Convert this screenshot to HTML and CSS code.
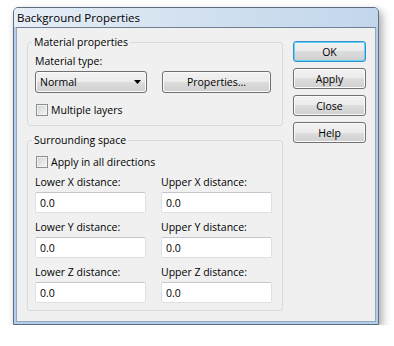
FILE: index.html
```html
<!DOCTYPE html>
<html>
<head>
    <title>Background Properties</title>
    <link rel="stylesheet" href="styles.css">
</head>
<body>
    <div class="window">
        <div class="titlebar">Background Properties</div>
        <div class="client">
            <div class="groups">
                <fieldset class="group material">
                    <legend>Material properties</legend>
                    <label class="field-label">Material type:</label>
                    <div class="material-row">
                        <button type="button" class="combo">
                            <span>Normal</span>
                            <svg width="7" height="4" viewBox="0 0 7 4"><polygon points="0,0 7,0 3.5,4" fill="#000"/></svg>
                        </button>
                        <button type="button" class="push props">Properties...</button>
                    </div>
                    <label class="check-row"><span class="check"></span>Multiple layers</label>
                </fieldset>

                <fieldset class="group space">
                    <legend>Surrounding space</legend>
                    <label class="check-row first"><span class="check"></span>Apply in all directions</label>
                    <div class="distances">
                        <div class="field">
                            <label>Lower X distance:</label>
                            <input type="text" value="0.0">
                        </div>
                        <div class="field">
                            <label>Upper X distance:</label>
                            <input type="text" value="0.0">
                        </div>
                        <div class="field">
                            <label>Lower Y distance:</label>
                            <input type="text" value="0.0">
                        </div>
                        <div class="field">
                            <label>Upper Y distance:</label>
                            <input type="text" value="0.0">
                        </div>
                        <div class="field">
                            <label>Lower Z distance:</label>
                            <input type="text" value="0.0">
                        </div>
                        <div class="field">
                            <label>Upper Z distance:</label>
                            <input type="text" value="0.0">
                        </div>
                    </div>
                </fieldset>
            </div>

            <div class="actions">
                <button type="button" class="push default">OK</button>
                <button type="button" class="push">Apply</button>
                <button type="button" class="push">Close</button>
                <button type="button" class="push">Help</button>
            </div>
        </div>
    </div>
</body>
</html>
```

FILE: styles.css
```css
body {
    margin: 0;
    background-color: #fff;
    font-family: "Open Sans", "Noto Sans", sans-serif;
    font-size: 10.5px;
    color: #000;
}

.window {
    width: 366px;
    margin: 7px 0 0 13px;
    box-sizing: border-box;
    border: 1px solid #5d6e82;
    border-radius: 5px 5px 0 0;
    padding: 0 2px 2px;
    background-color: #b4cde8;
    box-shadow: 3px 4px 9px rgba(0, 0, 0, 0.35);
}

.titlebar {
    height: 19px;
    line-height: 19px;
    margin: 0 -2px;
    padding-left: 3px;
    font-size: 11.5px;
    border-radius: 4px 4px 0 0;
    background: linear-gradient(to right, #e7eef6 0%, #d4e2f0 45%, #c2d6ec 100%);
}

.client {
    display: flex;
    padding: 7px 8px 10px 10px;
    border: 1px solid #93a7bf;
    border-top-color: #6f8094;
    background-color: #f0f0f0;
}

.groups {
    width: 256px;
    display: flex;
    flex-direction: column;
    gap: 7px;
}

.group {
    margin: 0;
    min-width: 0;
    padding: 5px 7px 8px;
    border: 1px solid #d3dce3;
    border-radius: 3px;
}

.group.space {
    padding-bottom: 7px;
}

.group legend {
    padding: 0 2px;
    margin-left: -3px;
    line-height: 14px;
}

.field-label,
.field label {
    display: block;
    line-height: 14px;
}

.material-row {
    display: flex;
    margin-top: 3px;
}

.push,
.combo {
    height: 21px;
    padding: 0;
    border: 1px solid #707070;
    border-radius: 3px;
    background: linear-gradient(#f2f2f2 0%, #ebebeb 50%, #dddddd 50%, #cfcfcf 100%);
    box-shadow: inset 0 0 0 1px #fbfbfb;
    font-family: inherit;
    font-size: inherit;
    color: #000;
}

.combo {
    width: 112px;
    height: 22px;
    display: flex;
    align-items: center;
    justify-content: space-between;
    padding: 0 5px 0 4px;
}

.props {
    width: 109px;
    height: 22px;
    margin-left: 15px;
}

.check-row {
    display: flex;
    align-items: center;
    line-height: 14px;
    margin-top: 10px;
}

.check-row.first {
    margin-top: 3px;
}

.check {
    width: 10px;
    height: 10px;
    margin: 0 3px 0 1px;
    border: 1px solid #8e8f8f;
    background: linear-gradient(135deg, #cfd3d8, #f6f6f6);
    box-shadow: inset 0 0 0 1px #f2f2f2;
}

.distances {
    display: grid;
    grid-template-columns: 111px 111px;
    column-gap: 15px;
    row-gap: 7px;
    margin-top: 6px;
}

.field input {
    display: block;
    width: 111px;
    height: 21px;
    margin-top: 3px;
    box-sizing: border-box;
    padding: 0 4px;
    border: 1px solid #dcdfe4;
    border-top-color: #c3c7cd;
    border-radius: 2px;
    background-color: #fff;
    font-family: inherit;
    font-size: inherit;
    color: #000;
}

.actions {
    width: 73px;
    display: flex;
    flex-direction: column;
    gap: 6px;
    margin: 6px 0 0 10px;
}

.push.default {
    border-color: #3a8fcc;
    box-shadow: inset 0 0 0 1px #5fd6f5;
}
```
